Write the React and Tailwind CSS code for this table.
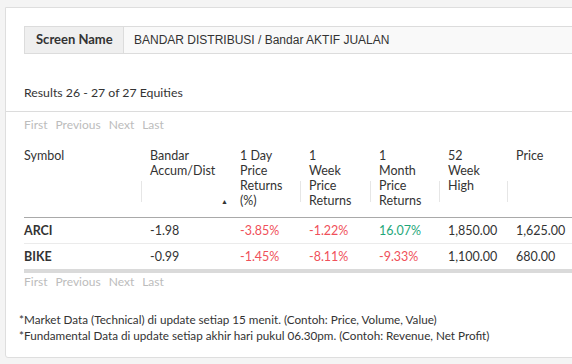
const rows = [
  { sym: 'ARCI', bandar: '-1.98', d1: '-3.85%', w1: '-1.22%', m1: '16.07%', high: '1,850.00', price: '1,625.00' },
  { sym: 'BIKE', bandar: '-0.99', d1: '-1.45%', w1: '-8.11%', m1: '-9.33%', high: '1,100.00', price: '680.00' },
]

const tone = (v) => (v.startsWith('-') ? 'text-[#f0505a]' : 'text-[#1fa77a]')

function Pager() {
  return (
    <div className="flex gap-[8px] text-[12px] text-[#bcbcbc] leading-none">
      <span>First</span>
      <span>Previous</span>
      <span>Next</span>
      <span>Last</span>
    </div>
  )
}

function Head({ children, sep = true, arrow = false }) {
  return (
    <th className="relative align-top text-left font-normal p-0 pb-[9px]">
      {sep && <span className="absolute left-[-9px] top-[33px] h-[21px] w-px bg-[#e6e6e6]" />}
      {arrow && <span className="absolute right-[12px] bottom-[8px] text-[7px] text-[#333]">▲</span>}
      {children}
    </th>
  )
}

export default function App() {
  return (
    <div className="w-[572px] h-[364px] bg-[#f4f4f4] pt-[7px] pl-[5px] overflow-hidden font-['Lato',sans-serif] text-[#333]">
      <div className="w-[600px] h-[351px] bg-white border border-[#dedede] rounded-bl-[3px]">
        <div className="pt-[18px] pl-[18px]">
          <div className="flex h-[28px] border border-[#dcdcdc] text-[13px]">
            <div className="w-[99px] bg-[#efefef] border-r border-[#dcdcdc] flex items-center pl-[11px] font-bold">
              Screen Name
            </div>
            <div className="flex-1 bg-[#f9f9f9] flex items-center pl-[10px] font-['Liberation_Sans',sans-serif] text-[12px]">
              BANDAR DISTRIBUSI / Bandar AKTIF JUALAN
            </div>
          </div>
          <div className="mt-[33px] text-[12.3px] leading-none">Results 26 - 27 of 27 Equities</div>
        </div>
        <div className="mt-[12px] border-t border-[#dcdcdc]" />
        <div className="pl-[18px] pt-[7px]">
          <Pager />
          <table className="mt-[17px] w-[580px] table-fixed border-collapse text-[12.5px] leading-[15px]">
            <colgroup>
              <col className="w-[126px]" />
              <col className="w-[90px]" />
              <col className="w-[69px]" />
              <col className="w-[70px]" />
              <col className="w-[69px]" />
              <col className="w-[68px]" />
              <col className="w-[88px]" />
            </colgroup>
            <thead>
              <tr className="border-b border-[#a9a9a9]">
                <Head sep={false}>Symbol</Head>
                <Head arrow>Bandar<br />Accum/Dist</Head>
                <Head sep={false}>1 Day<br />Price<br />Returns<br />(%)</Head>
                <Head>1<br />Week<br />Price<br />Returns</Head>
                <Head>1<br />Month<br />Price<br />Returns</Head>
                <Head>52<br />Week<br />High</Head>
                <Head>Price</Head>
              </tr>
            </thead>
            <tbody>
              {rows.map((r, i) => (
                <tr key={r.sym} className={i === 0 ? 'h-[26px] border-b border-[#ebebeb]' : 'h-[25px]'}>
                  <td className="p-0 font-bold">{r.sym}</td>
                  <td className="p-0">{r.bandar}</td>
                  <td className={`p-0 ${tone(r.d1)}`}>{r.d1}</td>
                  <td className={`p-0 ${tone(r.w1)}`}>{r.w1}</td>
                  <td className={`p-0 ${tone(r.m1)}`}>{r.m1}</td>
                  <td className="p-0">{r.high}</td>
                  <td className="p-0">{r.price}</td>
                </tr>
              ))}
            </tbody>
          </table>
          <div className="h-[4px] bg-[#dadada]" />
          <div className="pt-[3px]">
            <Pager />
          </div>
        </div>
        <div className="pl-[13px] pt-[23px] text-[11.7px] leading-[16px]">
          <div>*Market Data (Technical) di update setiap 15 menit. (Contoh: Price, Volume, Value)</div>
          <div>*Fundamental Data di update setiap akhir hari pukul 06.30pm. (Contoh: Revenue, Net Profit)</div>
        </div>
      </div>
    </div>
  )
}
